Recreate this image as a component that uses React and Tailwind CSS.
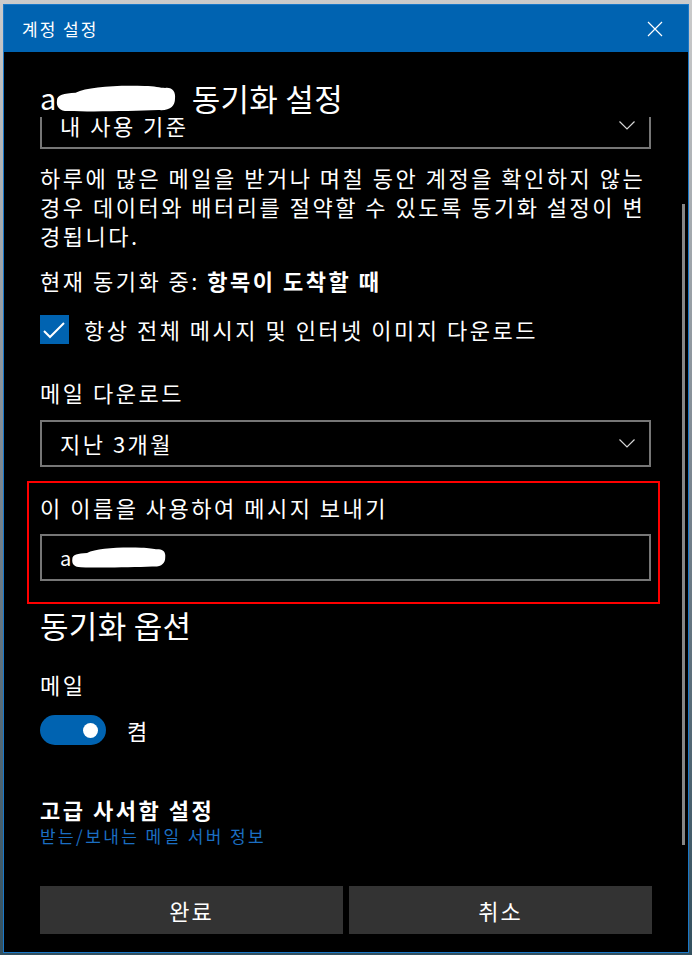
import React from 'react';

const Chevron = () => (
  <svg width="16" height="9" viewBox="0 0 16 9" fill="none">
    <path d="M0.5 0.5 L8 8 L15.5 0.5" stroke="#d6d6d6" strokeWidth="1.2" />
  </svg>
);

const Dropdown = ({ children, className = '' }) => (
  <div className={`flex h-[47px] items-center justify-between border-2 border-[#767676] pl-[18px] pr-[14px] ${className}`}>
    <span className="text-[22px] leading-[29px] tracking-[2.5px] text-white">{children}</span>
    <Chevron />
  </div>
);

const Scribble = ({ w, h }) => (
  <svg width={w} height={h} viewBox="0 0 124 28" preserveAspectRatio="none">
    <path
      d="M3 16 C3 10 10 9 22 8 C34 2 62 0 92 1 C102 1 108 3 113 3 C120 2 124 7 123 14 C123 22 118 27 106 26 C80 27 42 28 14 27 C6 27 2 23 3 16 Z"
      fill="#ffffff"
    />
  </svg>
);

export default function App() {
  return (
    <div className="h-[955px] w-[692px] overflow-hidden bg-gradient-to-b from-[#cbcbcb] via-[#7b8690] to-[#33505f] pl-[3px] pt-[4px] font-['Noto_Sans_CJK_KR','Noto_Sans',sans-serif]">
      <div className="flex h-[949px] w-[686px] flex-col border border-[#1a78c8] bg-black">
        {/* title bar */}
        <div className="flex h-[47px] shrink-0 items-center justify-between bg-[#0063b1] pl-[18px] pr-[25px]">
          <span className="text-[17px] tracking-[2px] text-white">계정 설정</span>
          <svg width="16" height="16" viewBox="0 0 16 16" fill="none">
            <path d="M1 1 L15 15 M15 1 L1 15" stroke="#ffffff" strokeWidth="1.2" />
          </svg>
        </div>

        {/* heading */}
        <div className="h-[65px] shrink-0 pl-[36px] pt-[26px]">
          <div className="flex h-[40px] items-center text-[31px] tracking-[0.3px] text-white">
            <span className="text-[29px]">a</span>
            <span className="-ml-[3px]">
              <Scribble w={122} h={27} />
            </span>
            <span className="ml-[16px]">동기화 설정</span>
          </div>
        </div>

        {/* scrolling region */}
        <div className="flex flex-1 overflow-hidden">
          <div className="ml-[36px] w-[611px] shrink-0">
            <Dropdown className="-mt-[15px]">내 사용 기준</Dropdown>

            <p className="mt-[14px] text-[22px] leading-[29px] tracking-[2.5px] text-white">
              하루에 많은 메일을 받거나 며칠 동안 계정을 확인하지 않는 경우 데이터와 배터리를 절약할 수 있도록 동기화 설정이 변경됩니다.
            </p>

            <p className="mt-[16px] text-[22px] leading-[29px] tracking-[2.5px] text-white">
              현재 동기화 중: <span className="font-bold">항목이 도착할 때</span>
            </p>

            <div className="mt-[20px] flex items-center">
              <div className="flex h-[29px] w-[29px] items-center justify-center bg-[#0063b1]">
                <svg width="29" height="29" viewBox="0 0 29 29" fill="none">
                  <path d="M4 16 L10 22 L24 8" stroke="#ffffff" strokeWidth="2" />
                </svg>
              </div>
              <span className="ml-[15px] text-[22px] leading-[29px] tracking-[2.5px] text-white">
                항상 전체 메시지 및 인터넷 이미지 다운로드
              </span>
            </div>

            <p className="mt-[34px] text-[22px] leading-[29px] tracking-[2.5px] text-white">메일 다운로드</p>
            <Dropdown className="mt-[13px]">지난 3개월</Dropdown>

            <div className="-ml-[13px] -mr-[9px] mt-[14px] border-2 border-[#ff0000] pb-[21px] pl-[11px] pr-[7px] pt-[10px]">
              <p className="text-[22px] leading-[29px] tracking-[2.5px] text-white">이 이름을 사용하여 메시지 보내기</p>
              <div className="mt-[12px] flex h-[47px] items-center border-2 border-[#767676] pl-[18px]">
                <span className="text-[20px] text-white">a</span>
                <span className="ml-[-1px]">
                  <Scribble w={96} h={21} />
                </span>
              </div>
            </div>

            <p className="mt-[1px] h-[40px] text-[31px] leading-[40px] tracking-[0.3px] text-white">동기화 옵션</p>

            <p className="mt-[25px] text-[22px] leading-[29px] tracking-[2.5px] text-white">메일</p>

            <div className="mt-[16px] flex items-center">
              <div className="flex h-[30px] w-[66px] items-center justify-end rounded-full bg-[#0063b1] pr-[8px]">
                <div className="h-[15px] w-[15px] rounded-full bg-white" />
              </div>
              <span className="ml-[21px] text-[22px] leading-[29px] text-white">켬</span>
            </div>

            <p className="mt-[50px] text-[22px] font-bold leading-[29px] tracking-[2.5px] text-white">고급 사서함 설정</p>
            <p className="mt-[1px] text-[17px] leading-[22px] tracking-[2.4px] text-[#1b6ec2]">받는/보내는 메일 서버 정보</p>
          </div>

          <div className="ml-[31px] w-[3px] shrink-0">
            <div className="mt-[87px] h-[641px] w-[3px] bg-[#868686]" />
          </div>
        </div>

        {/* footer buttons */}
        <div className="flex shrink-0 gap-[6px] pb-[18px] pl-[36px] pt-[18px]">
          <button className="flex h-[48px] w-[303px] items-center justify-center bg-[#333333] text-[22px] tracking-[2px] text-white">
            완료
          </button>
          <button className="flex h-[48px] w-[303px] items-center justify-center bg-[#333333] text-[22px] tracking-[2px] text-white">
            취소
          </button>
        </div>
      </div>
    </div>
  );
}
